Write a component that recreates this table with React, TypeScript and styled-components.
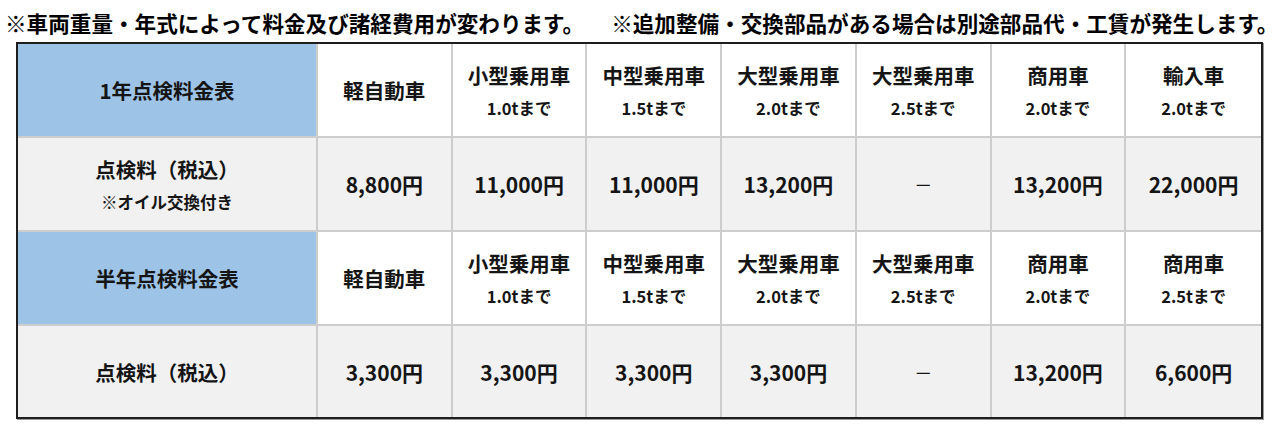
import React from "react";
import styled, { createGlobalStyle } from "styled-components";

const GlobalStyle = createGlobalStyle`
  html, body {
    margin: 0;
    padding: 0;
    background: #ffffff;
  }
  body {
    font-family: "Noto Sans CJK JP", "Noto Sans", sans-serif;
    color: #111;
  }
`;

type Col = { name: string; sub?: string };

type Section = {
  title: string;
  cols: Col[];
  label: string;
  labelNote?: string;
  prices: string[];
};

const DASH = "－";

const sections: Section[] = [
  {
    title: "1年点検料金表",
    cols: [
      { name: "軽自動車" },
      { name: "小型乗用車", sub: "1.0tまで" },
      { name: "中型乗用車", sub: "1.5tまで" },
      { name: "大型乗用車", sub: "2.0tまで" },
      { name: "大型乗用車", sub: "2.5tまで" },
      { name: "商用車", sub: "2.0tまで" },
      { name: "輸入車", sub: "2.0tまで" },
    ],
    label: "点検料（税込）",
    labelNote: "※オイル交換付き",
    prices: ["8,800円", "11,000円", "11,000円", "13,200円", DASH, "13,200円", "22,000円"],
  },
  {
    title: "半年点検料金表",
    cols: [
      { name: "軽自動車" },
      { name: "小型乗用車", sub: "1.0tまで" },
      { name: "中型乗用車", sub: "1.5tまで" },
      { name: "大型乗用車", sub: "2.0tまで" },
      { name: "大型乗用車", sub: "2.5tまで" },
      { name: "商用車", sub: "2.0tまで" },
      { name: "商用車", sub: "2.5tまで" },
    ],
    label: "点検料（税込）",
    prices: ["3,300円", "3,300円", "3,300円", "3,300円", DASH, "13,200円", "6,600円"],
  },
];

export default function App() {
  return (
    <>
      <GlobalStyle />
      <Page>
        <Notes>
          <Note>※車両重量・年式によって料金及び諸経費用が変わります。</Note>
          <Note>※追加整備・交換部品がある場合は別途部品代・工賃が発生します。</Note>
        </Notes>
        <Table>
          {sections.map((s, si) => (
            <React.Fragment key={si}>
              <Cell $tone="blue">
                <Main>{s.title}</Main>
              </Cell>
              {s.cols.map((c, i) => (
                <Cell key={`h${i}`} $tone="white" $last={i === s.cols.length - 1}>
                  <Main>{c.name}</Main>
                  {c.sub && <Sub>{c.sub}</Sub>}
                </Cell>
              ))}
              <Cell $tone="gray" $bottom={si === sections.length - 1}>
                <Main>{s.label}</Main>
                {s.labelNote && <Sub>{s.labelNote}</Sub>}
              </Cell>
              {s.prices.map((p, i) => (
                <Cell
                  key={`p${i}`}
                  $tone="gray"
                  $last={i === s.prices.length - 1}
                  $bottom={si === sections.length - 1}
                >
                  <Price $empty={p === DASH}>{p}</Price>
                </Cell>
              ))}
            </React.Fragment>
          ))}
        </Table>
      </Page>
    </>
  );
}

const Page = styled.div`
  width: 1280px;
  height: 432px;
  box-sizing: border-box;
  padding: 5px 0 0 0;
  overflow: hidden;
`;

const Notes = styled.div`
  display: flex;
  gap: 27px;
  padding: 0 0 0 5px;
  height: 34px;
  align-items: center;
`;

const Note = styled.div`
  font-size: 21.6px;
  font-weight: 700;
  white-space: nowrap;
  color: #000;
`;

const Table = styled.div`
  margin: 3px 0 0 16px;
  width: 1247px;
  box-sizing: border-box;
  border: 2px solid #1e1e1e;
  display: grid;
  grid-template-columns: 300px repeat(7, 1fr);
  grid-template-rows: 94px 94px 94px 91px;
  box-shadow: 1px 1px 0 #9a9a9a;
`;

const tones = {
  blue: "#9dc3e6",
  white: "#ffffff",
  gray: "#f1f1f1",
};

const Cell = styled.div<{
  $tone: keyof typeof tones;
  $last?: boolean;
  $bottom?: boolean;
}>`
  background: ${(p) => tones[p.$tone]};
  border-right: ${(p) => (p.$last ? "none" : "2px solid #cdcdcd")};
  border-bottom: ${(p) => (p.$bottom ? "none" : "2px solid #cdcdcd")};
  display: flex;
  flex-direction: column;
  align-items: center;
  justify-content: center;
  gap: 10px;
  text-align: center;
`;

const Main = styled.div`
  font-size: 20.5px;
  font-weight: 700;
  line-height: 26px;
  color: #151515;
`;

const Sub = styled.div`
  font-size: 16.5px;
  font-weight: 700;
  line-height: 20px;
  color: #151515;
`;

const Price = styled.div<{ $empty?: boolean }>`
  font-size: ${(p) => (p.$empty ? "18px" : "21px")};
  font-weight: ${(p) => (p.$empty ? 400 : 700)};
  color: #151515;
`;
